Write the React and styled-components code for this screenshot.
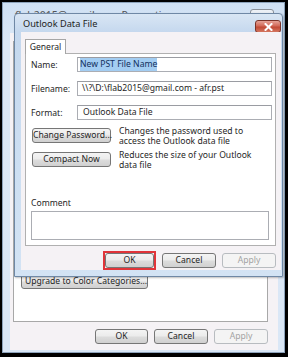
import React from 'react';
import styled, { createGlobalStyle } from 'styled-components';

const GlobalStyle = createGlobalStyle`
  html, body {
    margin: 0;
    padding: 0;
    background: #000;
  }
  body {
    font-family: "Noto Sans", "DejaVu Sans", sans-serif;
    font-size: 8.6px;
    color: #1e1e1e;
  }
  * { box-sizing: border-box; }
`;

const Screen = styled.div`
  position: relative;
  width: 288px;
  height: 357px;
  overflow: hidden;
  background: #000;
  padding: 2px 3px 4px 2px;
`;

const BackWindow = styled.div`
  height: 100%;
  display: flex;
  flex-direction: column;
  background: linear-gradient(#cfe0f3, #dbe8f6 40px, #dae7f6);
  border: 1px solid #8da3bb;
  padding: 0 6px 2px 7px;
`;

const BackTitleBar = styled.div`
  height: 30px;
  display: flex;
  align-items: flex-start;
  justify-content: space-between;
  padding: 5px 4px 0 5px;
  font-size: 10.5px;
  color: #555;
`;

const BackClose = styled.div`
  width: 24px;
  height: 14px;
  margin-top: 1px;
  border: 1px solid #8a9099;
  border-radius: 3px;
  background: linear-gradient(#eef2f7, #d3dbe5);
`;

const BackClient = styled.div`
  flex: 1;
  display: flex;
  flex-direction: column;
  background: #f5f2f5;
  padding: 8px 10px 6px 3px;
`;

const BackPanel = styled.div`
  flex: 1;
  display: flex;
  flex-direction: column;
  justify-content: flex-end;
  align-items: flex-start;
  border: 1px solid #a8a8a8;
  background: #fff;
  padding: 0 0 32px 7px;
`;

const ButtonRow = styled.div`
  display: flex;
  justify-content: flex-end;
  align-items: center;
  gap: 6px;
  margin-top: ${p => p.top || 0}px;
`;

const Button = styled.button`
  width: ${p => p.w || 54}px;
  height: 15px;
  padding: 0;
  font-family: "Noto Sans", "DejaVu Sans", sans-serif;
  font-size: 8.6px;
  line-height: 13px;
  color: ${p => (p.disabled ? '#a3a3a3' : '#1e1e1e')};
  border: 1px solid ${p => (p.disabled ? '#b8bcc0' : '#767676')};
  border-radius: 3px;
  background: ${p =>
    p.disabled
      ? '#f4f4f4'
      : 'linear-gradient(#f4f4f4 0%, #ececec 45%, #dcdcdc 55%, #d0d0d0 100%)'};
  white-space: nowrap;
  text-align: center;
`;

const UpgradeButton = styled(Button)`
  width: 127px;
  text-align: left;
  padding-left: 3px;
`;

const Highlight = styled.div`
  border: 2px solid #e0353a;
  display: flex;
`;

const Dialog = styled.div`
  position: absolute;
  left: 14px;
  top: 13px;
  width: 269px;
  height: 264px;
  display: flex;
  flex-direction: column;
  border: 1px solid #6f88a5;
  border-radius: 4px 4px 0 0;
  background: linear-gradient(#d9e6f4, #c5d8ee 18px, #cddff2 60%, #d3e3f4);
  padding: 0 1px 6px 6px;
  box-shadow: 1px 1px 2px rgba(0, 0, 0, 0.25);
`;

const TitleBar = styled.div`
  height: 18px;
  display: flex;
  align-items: center;
  justify-content: space-between;
  padding-left: 2px;
  font-size: 9.2px;
  color: #222;
`;

const CloseButton = styled.div`
  width: 26px;
  height: 13px;
  margin-top: 6px;
  align-self: flex-start;
  border: 1px solid #7a3328;
  border-radius: 3px;
  background: linear-gradient(#e5a397, #d26a58 45%, #c14a35 55%, #d4765f);
  display: flex;
  align-items: center;
  justify-content: center;
`;

const Client = styled.div`
  flex: 1;
  display: flex;
  flex-direction: column;
  background: #f5f2f5;
  padding: 7px 5px 0 4px;
`;

const Tabs = styled.div`
  display: flex;
`;

const Tab = styled.div`
  width: 41px;
  height: 15px;
  border: 1px solid #a6a6a6;
  border-bottom: none;
  background: #fff;
  margin-bottom: -1px;
  position: relative;
  z-index: 1;
  text-align: center;
  line-height: 14px;
`;

const TabPanel = styled.div`
  height: 193px;
  display: flex;
  flex-direction: column;
  border: 1px solid #b0b0b0;
  background: #fff;
  padding: 3px 3px 0 5px;
`;

const Fields = styled.div`
  display: flex;
  flex-direction: column;
  gap: 9px;
`;

const Field = styled.div`
  display: flex;
  align-items: center;
`;

const Label = styled.div`
  width: 46px;
`;

const TextBox = styled.div`
  flex: 1;
  height: 15px;
  border: 1px solid #abadb3;
  border-top-color: #9a9ca2;
  background: #fff;
  padding-left: ${p => p.pad || 4}px;
  line-height: 13px;
  white-space: nowrap;
  overflow: hidden;
`;

const Selected = styled.span`
  background: #a3cdf2;
  color: #12305c;
  padding: 1px 0;
`;

const Actions = styled.div`
  display: flex;
  flex-direction: column;
  gap: 9px;
  margin-top: 8px;
  padding-left: 1px;
`;

const Action = styled.div`
  display: flex;
  align-items: flex-start;
  gap: 8px;
  height: 15px;
`;

const Description = styled.div`
  line-height: 10px;
  margin-top: -2px;
  white-space: nowrap;
`;

const CommentLabel = styled.div`
  margin-top: 31px;
  line-height: 10px;
`;

const CommentBox = styled.div`
  height: 29px;
  margin: 3px 3px 0 0;
  border: 1px solid #abadb3;
  background: #fff;
`;

export default function App() {
  return (
    <Screen>
      <GlobalStyle />
      <BackWindow>
        <BackTitleBar>
          <span>flab2015@gmail.com Properties</span>
          <BackClose />
        </BackTitleBar>
        <BackClient>
          <BackPanel>
            <UpgradeButton>Upgrade to Color Categories...</UpgradeButton>
          </BackPanel>
          <ButtonRow top={7}>
            <Button w={53}>OK</Button>
            <Button>Cancel</Button>
            <Button disabled>Apply</Button>
          </ButtonRow>
        </BackClient>
      </BackWindow>

      <Dialog>
        <TitleBar>
          <span>Outlook Data File</span>
          <CloseButton>
            <svg width="9" height="8" viewBox="0 0 9 8">
              <path d="M1.5 1 L7.5 7 M7.5 1 L1.5 7" stroke="#fff" strokeWidth="2" strokeLinecap="square" />
            </svg>
          </CloseButton>
        </TitleBar>
        <Client>
          <Tabs>
            <Tab>General</Tab>
          </Tabs>
          <TabPanel>
            <Fields>
              <Field>
                <Label>Name:</Label>
                <TextBox pad={2}>
                  <Selected>New PST File Name</Selected>
                </TextBox>
              </Field>
              <Field>
                <Label>Filename:</Label>
                <TextBox>\\?\D:\flab2015@gmail.com - afr.pst</TextBox>
              </Field>
              <Field>
                <Label>Format:</Label>
                <TextBox pad={5}>Outlook Data File</TextBox>
              </Field>
            </Fields>
            <Actions>
              <Action>
                <Button w={79}>Change Password...</Button>
                <Description>
                  Changes the password used to
                  <br />
                  access the Outlook data file
                </Description>
              </Action>
              <Action>
                <Button w={79}>Compact Now</Button>
                <Description>
                  Reduces the size of your Outlook
                  <br />
                  data file
                </Description>
              </Action>
            </Actions>
            <CommentLabel>Comment</CommentLabel>
            <CommentBox />
          </TabPanel>
          <ButtonRow top={5}>
            <Highlight>
              <Button w={49}>OK</Button>
            </Highlight>
            <Button>Cancel</Button>
            <Button disabled>Apply</Button>
          </ButtonRow>
        </Client>
      </Dialog>
    </Screen>
  );
}
